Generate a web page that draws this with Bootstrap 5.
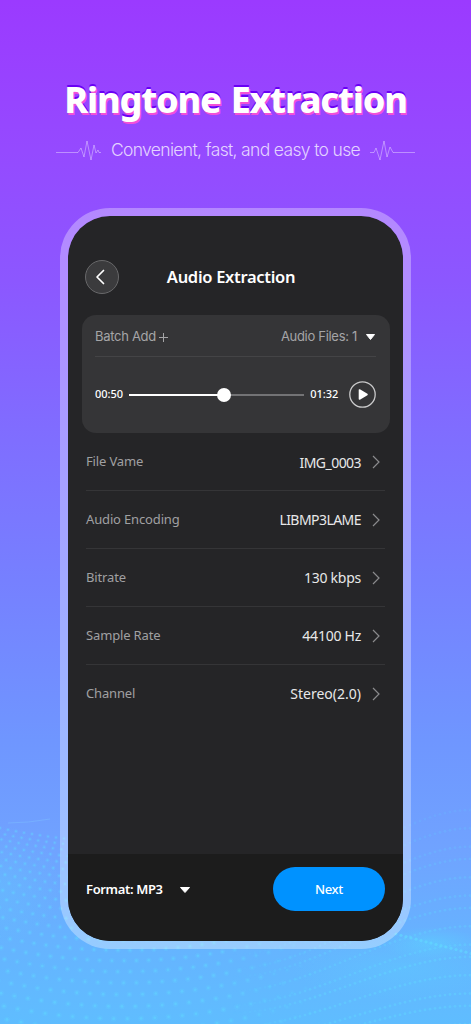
<!DOCTYPE html>
<html lang="en">
<head>
    <meta charset="UTF-8" />
    <title>Ringtone Extraction</title>
    <meta name="viewport" content="width=device-width, initial-scale=1" />
    <link href="https://cdn.jsdelivr.net/npm/bootstrap@5.3.2/dist/css/bootstrap.min.css" rel="stylesheet">
    <style>
        body {
          height: 1024px;
          overflow: hidden;
          font-family: "Noto Sans", sans-serif;
          background: linear-gradient(#9b3aff 0, #954aff 150px, #8c57ff 280px, #7f6eff 440px, #7680ff 580px, #6f96ff 740px, #70a3ff 850px, #66b3ff 940px, #5fbdff 1024px);
        }
        .wave-bg { top: 0; left: 0; z-index: -1; }
        .promo-title {
          margin-top: 74px;
          font-size: 36px;
          line-height: 52px;
          font-weight: 800;
          letter-spacing: -1.2px;
          word-spacing: 2px;
          text-shadow: 1px 2px 0 #f350d8, 0 -2px 0 #6a00f5;
        }
        .promo-sub {
          margin-top: 12px;
          height: 24px;
          gap: 10px;
          color: #e3d3ff;
          font-family: Inter, sans-serif;
          font-size: 17.5px;
          font-weight: 300;
          line-height: 24px;
          letter-spacing: -.66px;
        }
        .phone {
          width: 351px;
          height: 741px;
          margin-top: 46px;
          border: 8px solid rgba(255, 255, 255, 0.32);
          border-radius: 50px;
          background: #252527 padding-box;
          overflow: hidden;
        }
        .phone-head { padding: 44px 17px 0; }
        .head-title {
          width: 162px;
          margin-left: 31px;
          padding-top: 1px;
          font-size: 16.5px;
          font-weight: 600;
          letter-spacing: -.3px;
        }
        .back-btn {
          width: 34px;
          height: 34px;
          border: 1px solid #68686a;
          background: #3b3b3d;
        }
        .player {
          width: 308px;
          height: 118px;
          margin: 21px 0 0 13.5px;
          padding: 0 13.5px;
          border-radius: 14px;
          background: #353537;
        }
        .player-top {
          height: 42px;
          padding-top: 3px;
          border-bottom: 1px solid #444446;
          color: #a5a5a7;
          font-family: Inter, sans-serif;
          font-size: 13px;
          letter-spacing: -.3px;
        }
        .plus { margin-left: 3px; }
        .player-bar { height: 75px; font-size: 11px; font-weight: 500; }
        .track { width: 175px; height: 2px; margin: 0 6px; background: #737375; }
        .track-done { height: 2px; }
        .knob { width: 14px; height: 14px; top: -6px; margin-left: -7px; }
        .rows { padding: 0 18px; }
        .setting { height: 58px; font-size: 13px; letter-spacing: -.15px; }
        .setting:first-child { height: 57px; padding-top: 1px; }
        .setting + .setting { border-top: 1px solid #353537; }
        .setting-name { color: #a0a0a2; }
        .setting-value { color: #e8e8e9; font-size: 14px; }
        .value-caps { letter-spacing: -.55px; }
        .value-num { letter-spacing: -.25px; }
        .value-text { letter-spacing: 0; }
        .phone-foot { height: 87px; padding: 13px 18px 0; background: #1c1c1c; }
        .format { height: 44px; padding-top: 1px; font-size: 13px; font-weight: 600; letter-spacing: -.35px; }
        .next-btn {
          width: 112px;
          height: 44px;
          padding: 1px 0 0;
          background: #0092ff;
          font-size: 13px;
          font-weight: 500;
          letter-spacing: -.3px;
        }
    </style>
</head>
<body class="d-flex flex-column align-items-center text-white">

<!-- Dotted waves -->
<svg class="wave-bg position-absolute" id="waves" width="471" height="1024" viewBox="0 0 471 1024">
    <defs>
        <radialGradient id="glow"><stop stop-color="#58dcff" stop-opacity=".4"/><stop offset="1" stop-color="#58dcff" stop-opacity="0"/></radialGradient>
    </defs>
    <ellipse cx="0" cy="885" rx="60" ry="60" fill="url(#glow)" opacity=".6"/>
    <ellipse cx="430" cy="943" rx="50" ry="16" fill="url(#glow)"/>
    <ellipse cx="400" cy="968" rx="110" ry="32" fill="url(#glow)" opacity=".6"/>
    <path d="M8 823Q28 823 50 819" fill="none" stroke="#7fc6ff" stroke-opacity=".4"/>
</svg>

<!-- Heading -->
<h1 class="promo-title mb-0">Ringtone Extraction</h1>
<div class="promo-sub d-flex align-items-center">
    <svg width="45" height="24" fill="none" stroke="#fff" stroke-opacity=".38"><path d="M0 14.5H22L25 10L28 19L31 3L35 22L38 7L40 15L42 12L43 14.5H45"/></svg>
    <span>Convenient, fast, and easy to use</span>
    <svg width="45" height="24" fill="none" stroke="#fff" stroke-opacity=".38"><path d="M0 14.5H4L6 10L10 22L14 3L17 19L20 9L23 14.5H45"/></svg>
</div>

<!-- Phone -->
<main class="phone d-flex flex-column">
    <div class="phone-head d-flex align-items-center">
        <button class="back-btn rounded-circle p-0 d-flex align-items-center justify-content-center" aria-label="Back">
            <svg width="16" height="18" fill="none" stroke="#fff" stroke-width="1.7" stroke-linecap="round" stroke-linejoin="round"><path d="M9.5 2.5L3 9L9.5 15.5"/></svg>
        </button>
        <div class="head-title text-center text-nowrap">Audio Extraction</div>
    </div>

    <section class="player">
        <div class="player-top d-flex align-items-center">
            <span>Batch Add</span>
            <svg class="plus" width="9" height="9" stroke="#a5a5a7"><path d="M0 4.5H9M4.5 0V9"/></svg>
            <span class="ms-auto me-2">Audio Files: 1</span>
            <svg width="11" height="8"><path d="M1.5 1.5H9.5L5.5 6.5Z" fill="#fff" stroke="#fff" stroke-linejoin="round"/></svg>
        </div>
        <div class="player-bar d-flex align-items-center">
            <span>00:50</span>
            <div class="track position-relative">
                <div class="track-done bg-white" style="width: 54.3%"></div>
                <div class="knob position-absolute bg-white rounded-circle" style="left: 54.3%"></div>
            </div>
            <span>01:32</span>
            <svg class="ms-auto" width="27" height="27"><circle cx="13.5" cy="13.5" r="12.7" fill="none" stroke="#c9c9ca" stroke-width="1.3"/><path d="M10.5 9V18L18 13.5Z" fill="#fff" stroke="#fff" stroke-width="1.6" stroke-linejoin="round"/></svg>
        </div>
    </section>

    <section class="rows">
        <div class="setting d-flex align-items-center">
            <span class="setting-name">File Vame</span><span class="setting-value value-caps ms-auto">IMG_0003</span>
            <svg width="24" height="14" fill="none" stroke="#8b8b8d" stroke-width="1.2"><path d="M12 1L18 7L12 13"/></svg>
        </div>
        <div class="setting d-flex align-items-center">
            <span class="setting-name">Audio Encoding</span><span class="setting-value value-caps ms-auto">LIBMP3LAME</span>
            <svg width="24" height="14" fill="none" stroke="#8b8b8d" stroke-width="1.2"><path d="M12 1L18 7L12 13"/></svg>
        </div>
        <div class="setting d-flex align-items-center">
            <span class="setting-name">Bitrate</span><span class="setting-value value-num ms-auto">130 kbps</span>
            <svg width="24" height="14" fill="none" stroke="#8b8b8d" stroke-width="1.2"><path d="M12 1L18 7L12 13"/></svg>
        </div>
        <div class="setting d-flex align-items-center">
            <span class="setting-name">Sample Rate</span><span class="setting-value value-num ms-auto">44100 Hz</span>
            <svg width="24" height="14" fill="none" stroke="#8b8b8d" stroke-width="1.2"><path d="M12 1L18 7L12 13"/></svg>
        </div>
        <div class="setting d-flex align-items-center">
            <span class="setting-name">Channel</span><span class="setting-value value-text ms-auto">Stereo(2.0)</span>
            <svg width="24" height="14" fill="none" stroke="#8b8b8d" stroke-width="1.2"><path d="M12 1L18 7L12 13"/></svg>
        </div>
    </section>

    <footer class="phone-foot d-flex align-items-start mt-auto">
        <div class="format d-flex align-items-center">
            <span>Format: MP3</span>
            <svg class="ms-3" width="12" height="8"><path d="M1.5 1.5H10.5L6 6.5Z" fill="#fff" stroke="#fff" stroke-linejoin="round"/></svg>
        </div>
        <button class="next-btn btn rounded-pill border-0 text-white ms-auto">Next</button>
    </footer>
</main>

<script src="https://cdn.jsdelivr.net/npm/bootstrap@5.3.2/dist/js/bootstrap.bundle.min.js"></script>
<script>
    const waves = document.getElementById("waves");
    const add = (x, y, r, o) => {
      const c = document.createElementNS("http://www.w3.org/2000/svg", "circle");
      c.setAttribute("cx", x); c.setAttribute("cy", y); c.setAttribute("r", r);
      c.setAttribute("fill", "#62dcff"); c.setAttribute("fill-opacity", o);
      waves.appendChild(c);
    };
    // rows get further apart towards the bottom edge
    for (let i = 0; i < 24; i++) {
      const t = i / 21;
      const y0 = 828 + 110 * t + 80 * t * t;
      const gap = 8 + 6 * t;
      for (let x = (i * 5) % gap - gap; x < 330; x += gap) {
        const y = y0 + x * 0.22 - x * x * 0.0009;
        const o = Math.min(1, (335 - x) / 120);
        add(x, y, 2 + t, 0.16 * o);
        add(x, y, 1 + 0.4 * t, 0.38 * o);
      }
    }
    // waves rising towards the right edge
    for (let i = 0; i < 15; i++) {
      for (let x = 230; x < 475; x += 5) {
        const u = (x - 230) / 241;
        const y = 905 + i * 12 - 95 * u * u * (3 - 2 * u) * (1 - i / 22) + (i % 3) * 2;
        add(x, y, 1.4, (0.13 + 0.025 * Math.min(i, 9)) * Math.min(1, u * 3));
      }
    }
    for (let x = 396; x < 475; x += 5) add(x, 934 + (x - 396) * 0.26, 1.6, 0.55);
</script>
</body>
</html>
